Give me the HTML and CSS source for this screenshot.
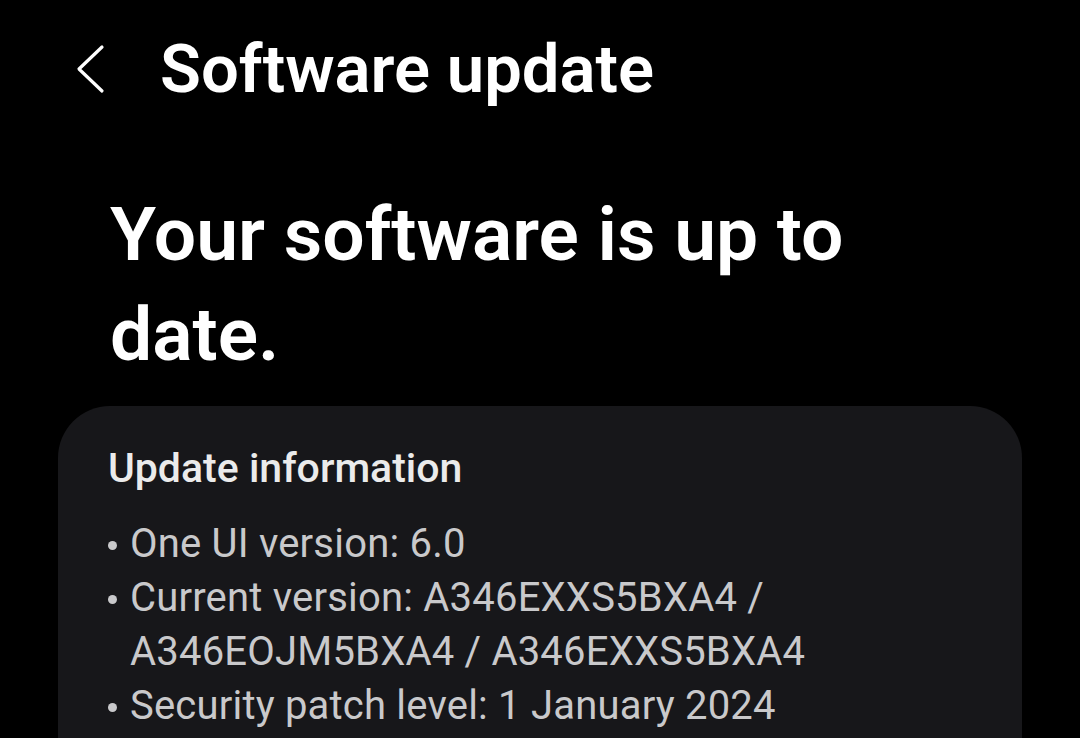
FILE: index.html
```html
<!DOCTYPE html>
<html lang="en">
  <head>
    <meta charset="utf-8" />
    <meta name="viewport" content="width=device-width, initial-scale=1" />
    <title>Software update</title>
    <link rel="stylesheet" href="styles.css">
  </head>

  <body>
    <div class="screen">
      <header class="topbar">
        <button type="button" class="back" aria-label="Back">
          <svg width="32" height="50" viewBox="0 0 32 50">
            <path d="M28 3 L5 25 L28 47" fill="none" stroke="#fff" stroke-width="3.2" stroke-linecap="round" stroke-linejoin="round" />
          </svg>
        </button>
        <h1 class="title">Software update</h1>
      </header>

      <h2 class="status">Your software is up to date.</h2>

      <div class="card">
        <h3 class="card-title">Update information</h3>
        <ul class="info">
          <li>One UI version: 6.0</li>
          <li>Current version: A346EXXS5BXA4 / A346EOJM5BXA4 / A346EXXS5BXA4</li>
          <li>Security patch level: 1 January 2024</li>
        </ul>
      </div>
    </div>
  </body>
</html>
```

FILE: styles.css
```css
html,
body {
  margin: 0;
  height: 100%;
  background: #000;
  overflow: hidden;
}

.screen {
  font-family: Roboto, "Noto Sans", sans-serif;
  color: #fff;
  padding: 0 58px;
}

.topbar {
  display: flex;
  align-items: center;
  height: 138px;
}

.back {
  background: none;
  border: 0;
  padding: 0;
  margin-left: 16px;
  width: 86px;
  display: flex;
  align-items: center;
}

.title {
  margin: 0;
  font-size: 67px;
  font-weight: 600;
}

.status {
  margin: 46px 0 0 52px;
  font-size: 75px;
  font-weight: 600;
  line-height: 100px;
  width: 780px;
}

.card {
  margin-top: 22px;
  background: #17171a;
  border-radius: 52px;
  padding: 38px 50px 40px 50px;
  min-height: 400px;
}

.card-title {
  margin: 0 0 25px;
  font-size: 41px;
  font-weight: 500;
  color: #ebebeb;
}

.info {
  list-style: none;
  margin: 0;
  padding: 0;
  font-size: 40px;
  letter-spacing: 0.2px;
  line-height: 54px;
  color: #c9c9cb;
}

.info li {
  position: relative;
  padding-left: 22px;
}

.info li::before {
  content: "";
  position: absolute;
  left: 0;
  top: 24px;
  width: 9px;
  height: 9px;
  border-radius: 50%;
  background: #c9c9cb;
}
```
